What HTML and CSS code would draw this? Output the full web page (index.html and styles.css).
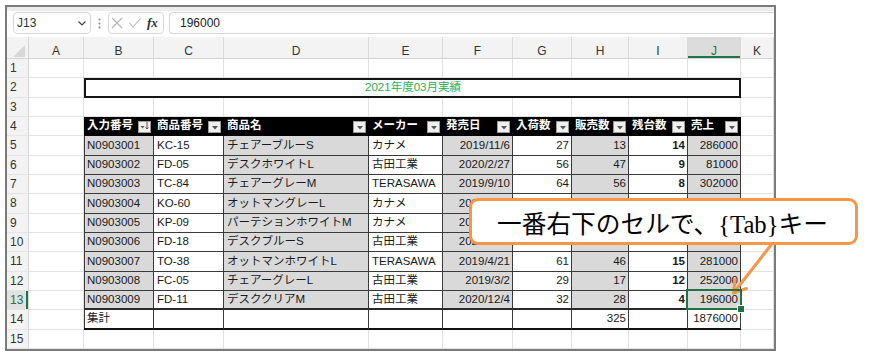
FILE: index.html
```html
<!DOCTYPE html>
<html lang="ja">
<head>
    <meta charset="UTF-8">
    <meta name="viewport" content="width=device-width, initial-scale=1.0">
    <title>売上実績</title>
    <link rel="stylesheet" href="styles.css">
</head>
<body>
    <div class="page">
        <div class="sheet">
            <!-- 数式バー -->
            <div class="formula-bar">
                <div class="name-box">
                    <span>J13</span>
                    <svg width="8" height="5" viewBox="0 0 8 5"><polyline points="0.5,0.5 4,4 7.5,0.5" fill="none" stroke="#444" stroke-width="1.2"/></svg>
                </div>
                <div class="dots">
                    <svg width="3" height="11" viewBox="0 0 3 11"><circle cx="1.5" cy="1.5" r="1" fill="#888"/><circle cx="1.5" cy="5.5" r="1" fill="#888"/><circle cx="1.5" cy="9.5" r="1" fill="#888"/></svg>
                </div>
                <div class="fx-box">
                    <svg width="12" height="12" viewBox="0 0 12 12"><path d="M1 1 L11 11 M11 1 L1 11" stroke="#b5b5b5" stroke-width="1.1"/></svg>
                    <svg width="12" height="12" viewBox="0 0 12 12"><polyline points="0.5,6 4,10 11.5,1.5" fill="none" stroke="#b5b5b5" stroke-width="1.1"/></svg>
                    <span class="fx">fx</span>
                </div>
                <div class="formula-input">196000</div>
            </div>
            <!-- シート本体 -->
            <div class="grid" id="grid"></div>
        </div>

        <!-- 吹き出し -->
        <div class="callout">一番右下のセルで、{Tab}キー</div>
        <svg class="arrow" width="889" height="356" viewBox="0 0 889 356">
            <line x1="771" y1="245" x2="735.5" y2="290.5" stroke="#f79646" stroke-width="3" stroke-linecap="round"/>
            <polyline points="735,279.5 733.5,293 746.5,288.5" fill="none" stroke="#f79646" stroke-width="3" stroke-linecap="round" stroke-linejoin="round"/>
        </svg>
    </div>

    <script>
        // 見出しとデータ
        let head = ['入力番号', '商品番号', '商品名', 'メーカー', '発売日', '入荷数', '販売数', '残台数', '売上']
        let data = [
            ['N0903001', 'KC-15', 'チェアーブルーS', 'カナメ', '2019/11/6', 27, 13, 14, 286000],
            ['N0903002', 'FD-05', 'デスクホワイトL', '古田工業', '2020/2/27', 56, 47, 9, 81000],
            ['N0903003', 'TC-84', 'チェアーグレーM', 'TERASAWA', '2019/9/10', 64, 56, 8, 302000],
            ['N0903004', 'KO-60', 'オットマングレーL', 'カナメ', '2020/1/15', 45, 38, 7, 168000],
            ['N0903005', 'KP-09', 'パーテションホワイトM', 'カナメ', '2019/12/3', 52, 42, 10, 150000],
            ['N0903006', 'FD-18', 'デスクブルーS', '古田工業', '2020/3/24', 50, 38, 12, 160000],
            ['N0903007', 'TO-38', 'オットマンホワイトL', 'TERASAWA', '2019/4/21', 61, 46, 15, 281000],
            ['N0903008', 'FC-05', 'チェアーグレーL', '古田工業', '2019/3/2', 29, 17, 12, 252000],
            ['N0903009', 'FD-11', 'デスククリアM', '古田工業', '2020/12/4', 32, 28, 4, 196000],
        ]
        let letters = ['A', 'B', 'C', 'D', 'E', 'F', 'G', 'H', 'I', 'J', 'K']

        let filterBtn = '<i class="filter"><svg width="6" height="4" viewBox="0 0 6 4"><polygon points="0,0 6,0 3,3.5" fill="#555"/></svg></i>'
        let sortBtn = '<i class="filter"><svg width="9" height="9" viewBox="0 0 9 9"><polygon points="0.5,5 4.5,5 2.5,7.5" fill="#555"/><path d="M7 0.5 V8 M5.5 6.5 L7 8 L8.5 6.5" fill="none" stroke="#555" stroke-width="1"/></svg></i>'

        let grid = document.querySelector('#grid')
        function add(cls, html) {
            let div = document.createElement('div')
            div.className = cls
            div.innerHTML = html
            grid.appendChild(div)
        }

        // 列見出し
        add('corner', '<svg width="22" height="22" viewBox="0 0 22 22"><polygon points="6,20 18,8 18,20" fill="#d6d6d6"/></svg>')
        letters.forEach(function (l) {
            add('col-head' + (l === 'J' ? ' sel-col' : ''), l)
        })

        for (let r = 1; r <= 15; r++) {
            add('row-head' + (r === 13 ? ' sel-row' : ''), r)
            for (let c = 0; c < 11; c++) {
                let i = c - 1
                let inTable = c >= 1 && c <= 9
                if (r === 2 && inTable) {
                    // B2:J2 結合セル
                    if (c === 1) add('cell title', '2021年度03月実績')
                } else if (r === 4 && inTable) {
                    add('cell th', '<span>' + head[i] + '</span>' + (c === 1 ? sortBtn : filterBtn))
                } else if (r >= 5 && r <= 13 && inTable) {
                    let cls = 'cell t'
                    if (i % 2 === 0) cls += ' grey'
                    if (i >= 4) cls += ' num'
                    if (i === 7) cls += ' bold'
                    if (c === 1) cls += ' first'
                    if (r === 13) cls += ' last'
                    if (r === 13 && c === 9) cls += ' sel'
                    add(cls, data[r - 5][i])
                } else if (r === 14 && inTable) {
                    let text = c === 1 ? '集計' : c === 7 ? '325' : c === 9 ? '1876000' : ''
                    add('cell tot' + (i >= 4 ? ' num' : '') + (c === 1 ? ' first' : ''), text)
                } else {
                    add('cell', '')
                }
            }
        }
    </script>
</body>
</html>
```

FILE: styles.css
```css
* {
  margin: 0;
  padding: 0;
  box-sizing: border-box;
}
body {
  background: #fff;
  font-family: "Liberation Sans", "Noto Sans CJK JP", sans-serif;
  color: #1a1a1a;
}
.page {
  position: relative;
  width: 889px;
  height: 356px;
  padding: 5px;
}
.sheet {
  width: 771px;
  height: 346px;
  border: 2px solid #7b7b7b;
  display: flex;
  flex-direction: column;
  overflow: hidden;
}

/* 数式バー */
.formula-bar {
  flex-shrink: 0;
  height: 30px;
  border-top: 4px solid #ececec;
  padding: 1px 0 0 6px;
  display: flex;
  align-items: flex-start;
}
.name-box {
  width: 78px;
  height: 22px;
  border: 1px solid #d6d6d6;
  border-radius: 4px;
  display: flex;
  align-items: center;
  justify-content: space-between;
  padding: 0 4px 0 3px;
  font-size: 12px;
  color: #333;
}
.dots {
  width: 17px;
  height: 22px;
  display: flex;
  align-items: center;
  justify-content: center;
}
.fx-box {
  width: 56px;
  height: 22px;
  border: 1px solid #d6d6d6;
  border-radius: 4px;
  display: flex;
  align-items: center;
  gap: 6px;
  padding-left: 2px;
}
.fx {
  font: italic bold 13px "Liberation Serif", serif;
  color: #333;
}
.formula-input {
  flex: 1;
  height: 22px;
  margin-left: 5px;
  border: 1px solid #d6d6d6;
  border-right: none;
  border-radius: 4px 0 0 4px;
  padding-left: 10px;
  display: flex;
  align-items: center;
  font-size: 12px;
  color: #222;
}

/* シート */
.grid {
  flex: 1;
  min-height: 0;
  display: grid;
  grid-template-columns: 22px 55px 70px 70px 145px 74px 70px 59px 57px 59px 53px 1fr;
  grid-template-rows: 22px repeat(15, minmax(0, 1fr));
  font-size: 11.5px;
  line-height: 1;
}
.corner {
  background: #f3f3f3;
  border-right: 1px solid #d4d4d4;
  border-bottom: 1px solid #d4d4d4;
}
.corner svg {
  display: block;
}
.col-head {
  background: #f3f3f3;
  border-right: 1px solid #dadada;
  border-bottom: 1px solid #d4d4d4;
  display: flex;
  align-items: center;
  justify-content: center;
  padding-top: 6px;
  font-size: 12px;
  color: #333;
}
.col-head.sel-col {
  background: #dcdcdc;
  color: #217346;
  box-shadow: inset 0 -2px 0 #217346;
}
.row-head {
  background: #f3f3f3;
  border-right: 1px solid #d4d4d4;
  border-bottom: 1px solid #e4e4e4;
  display: flex;
  align-items: center;
  padding-left: 3px;
  font-size: 12px;
  color: #333;
}
.row-head.sel-row {
  background: #e1e1e1;
  color: #217346;
  box-shadow: inset -2px 0 0 #217346;
}
.cell {
  border-right: 1px solid #e2e2e2;
  border-bottom: 1px solid #e2e2e2;
  display: flex;
  align-items: center;
  padding: 0 2px 0 3px;
  white-space: nowrap;
  overflow: hidden;
}
.cell.title {
  grid-column: span 9;
  border: 2px solid #151515;
  justify-content: center;
  color: #2aae55;
}
.cell.th {
  background: #000;
  border-color: #000;
  color: #fff;
  font-weight: bold;
}
.cell.th .filter {
  margin-left: auto;
  align-self: flex-end;
  margin-bottom: 2px;
  width: 13px;
  height: 12px;
  background: #f0f0f0;
  border: 1px solid #9a9a9a;
  display: flex;
  align-items: flex-end;
  justify-content: center;
  padding-bottom: 2px;
}
.cell.th .filter svg {
  display: block;
}
.cell.t {
  border-right-color: #3a3a3a;
  border-bottom-color: #3a3a3a;
}
.cell.t.last {
  border-bottom: 2px solid #2a2a2a;
}
.cell.grey {
  background: #d9d9d9;
}
.cell.num {
  justify-content: flex-end;
}
.cell.bold {
  font-weight: bold;
}
.cell.first {
  box-shadow: inset 1px 0 0 #3a3a3a;
}
.cell.tot {
  border-right-color: #3a3a3a;
  border-bottom: 2px solid #111;
}
.cell.sel {
  position: relative;
  overflow: visible;
}
.cell.sel::after {
  content: "";
  position: absolute;
  left: -2px;
  top: -2px;
  right: -2px;
  bottom: -2px;
  border: 2px solid #217346;
  z-index: 1;
}
.cell.sel::before {
  content: "";
  position: absolute;
  right: -5px;
  bottom: -5px;
  width: 6px;
  height: 6px;
  background: #217346;
  border: 1px solid #fff;
  z-index: 2;
}

/* 吹き出し */
.callout {
  position: absolute;
  left: 469px;
  top: 198px;
  width: 389px;
  height: 47px;
  border: 3px solid #f79646;
  border-radius: 9px;
  background: #fff;
  display: flex;
  align-items: center;
  padding-left: 25px;
  font: 24.7px "Liberation Serif", "Noto Sans CJK JP", serif;
  color: #000;
  white-space: nowrap;
}
.arrow {
  position: absolute;
  left: 0;
  top: 0;
  pointer-events: none;
}
```
